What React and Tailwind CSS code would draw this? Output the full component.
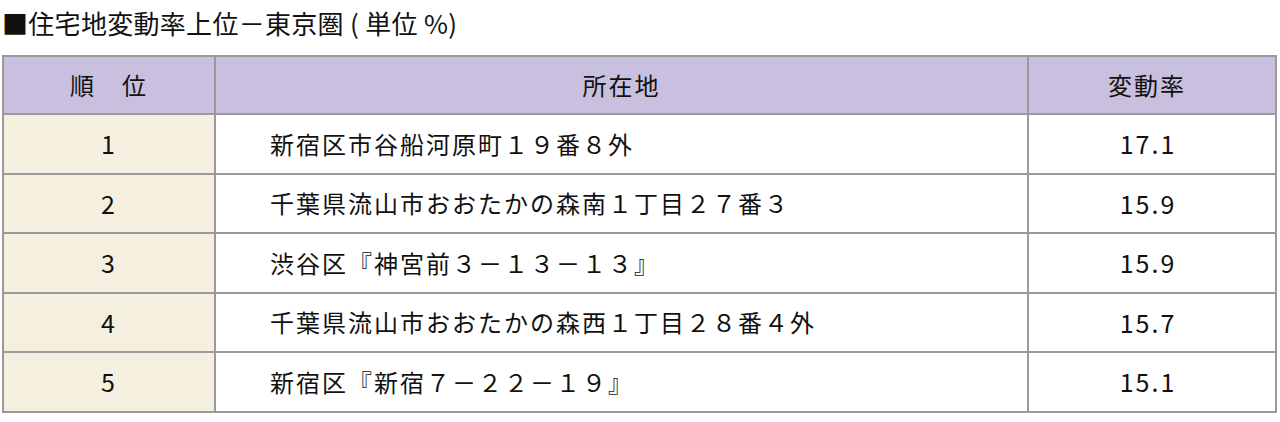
export default function App() {
  const rows = [
    ["1", "新宿区市谷船河原町１９番８外", "17.1"],
    ["2", "千葉県流山市おおたかの森南１丁目２７番３", "15.9"],
    ["3", "渋谷区『神宮前３－１３－１３』", "15.9"],
    ["4", "千葉県流山市おおたかの森西１丁目２８番４外", "15.7"],
    ["5", "新宿区『新宿７－２２－１９』", "15.1"],
  ];
  const font = { fontFamily: '"Noto Sans CJK JP", "Noto Sans", sans-serif' };
  return (
    <div className="w-[1280px] h-[422px] bg-white text-[#111]" style={font}>
      <div className="h-[44px] pl-[2px] flex items-center text-[26px] tracking-[0.3px]">
        ■住宅地変動率上位－東京圏 ( 単位 %)
      </div>
      <div className="mt-[11px] ml-[2px] w-[1275px] bg-[#9a9a9a] p-[2px] grid grid-cols-[210px_811px_246px] gap-[2px] text-[24px] tracking-[2px]">
        <div className="h-[56px] bg-[#c9bfdf] flex items-center justify-center">順　位</div>
        <div className="h-[56px] bg-[#c9bfdf] flex items-center justify-center">所在地</div>
        <div className="h-[56px] bg-[#c9bfdf] flex items-center justify-center pr-[10px]">変動率</div>
        {rows.map((r) => (
          <>
            <div key={r[0] + "a"} className="h-[57.5px] bg-[#f5efe0] flex items-center justify-center text-[25px]">{r[0]}</div>
            <div key={r[0] + "b"} className="h-[57.5px] bg-white flex items-center pl-[54px]">{r[1]}</div>
            <div key={r[0] + "c"} className="h-[57.5px] bg-white flex items-center justify-center text-[25px] pr-[8px]">{r[2]}</div>
          </>
        ))}
      </div>
    </div>
  );
}
